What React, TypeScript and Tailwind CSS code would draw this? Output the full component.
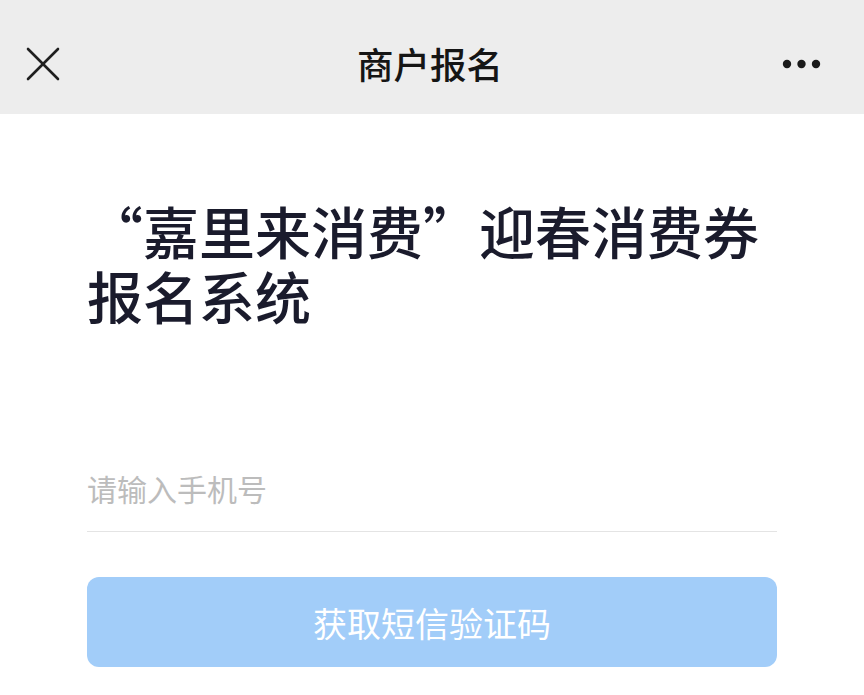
import React from 'react';

const FONT = { fontFamily: '"Noto Sans CJK SC", "Noto Sans", sans-serif' };

function CloseIcon() {
  return (
    <svg width="34" height="34" viewBox="0 0 34 34" fill="none" stroke="#1f1f1f" strokeWidth="2.6" strokeLinecap="round">
      <path d="M2 2 L32 32" />
      <path d="M32 2 L2 32" />
    </svg>
  );
}

function MoreIcon() {
  return (
    <svg width="40" height="10" viewBox="0 0 40 10" fill="#1a1a1a">
      <circle cx="5" cy="5" r="4.2" />
      <circle cx="19.5" cy="5" r="4.2" />
      <circle cx="34" cy="5" r="4.2" />
    </svg>
  );
}

export default function App() {
  return (
    <div className="w-[864px] h-[695px] bg-white overflow-hidden" style={FONT}>
      {/* Header */}
      <div className="h-[114px] bg-[#ededed] pt-[14px] flex items-center justify-between px-[26px]">
        <div className="w-[60px] flex items-center">
          <CloseIcon />
        </div>
        <h1 className="text-[36.5px] leading-none text-[#151515] font-medium pr-[4px]">商户报名</h1>
        <div className="w-[60px] flex justify-end pr-[16px]">
          <MoreIcon />
        </div>
      </div>

      {/* Content */}
      <div className="px-[87px]">
        <h2 className="mt-[83px] text-[56px] leading-[65px] font-medium text-[#1a1b2c]">
          “嘉里来消费”迎春消费券报名系统
        </h2>

        <div className="mt-[141px] pb-[23px] border-b border-[#e4e4e4]">
          <input
            type="tel"
            placeholder="请输入手机号"
            className="w-full h-[40px] text-[30px] leading-[40px] text-[#222] placeholder:text-[#bcbcbc] outline-none bg-transparent"
            style={FONT}
          />
        </div>

        <button
          className="mt-[45px] w-full h-[90px] rounded-[12px] bg-[#a2cdf9] text-white text-[34px] flex items-center justify-center"
          style={FONT}
        >
          获取短信验证码
        </button>
      </div>
    </div>
  );
}
